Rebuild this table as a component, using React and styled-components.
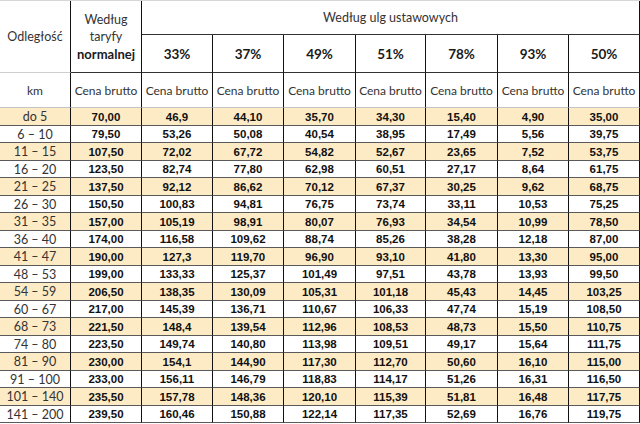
import React from "react";
import styled, { createGlobalStyle } from "styled-components";

const GlobalStyle = createGlobalStyle`
  html, body {
    margin: 0;
    padding: 0;
    background: #fff;
  }
  * { box-sizing: border-box; }
`;

const widths = [71, 71, 71, 71, 72, 70, 72, 71, 71];

const Grid = styled.div`
  display: grid;
  grid-template-columns: ${widths.map((w) => `${w}px`).join(" ")};
  grid-template-rows: 34px 38px 35px repeat(9, 18px 17px);
  width: 640px;
  border-top: 1px solid #d6d6d6;
  font-family: Lato, "Open Sans", sans-serif;
  color: #333;
`;

const Cell = styled.div`
  display: flex;
  flex-direction: column;
  align-items: center;
  justify-content: center;
  text-align: center;
  white-space: nowrap;
  border-right: 1px solid #111;
  border-bottom: 1px solid ${(p) => p.$bottom || "#333"};
  background: ${(p) => (p.$alt ? "#fdebc6" : "#fff")};
  grid-column: span ${(p) => p.$cols || 1};
  grid-row: span ${(p) => p.$rows || 1};
`;

const HeadCell = styled(Cell)`
  font-size: 12.5px;
  line-height: 17px;
`;

const Strong = styled.span`
  font-weight: bold;
  font-size: 13px;
  color: #1a1a1a;
  margin-top: 1px;
`;

const PercentCell = styled(Cell)`
  font-weight: bold;
  font-size: 13.5px;
  color: #1a1a1a;
  padding-top: 1px;
`;

const SubHeadCell = styled(Cell)`
  font-size: 12px;
  border-bottom-color: #c4c4c4;
`;

const KmCell = styled(Cell)`
  font-size: 12.5px;
  color: #333;
  border-bottom-color: #5a5a5a;
`;

const PriceCell = styled(Cell)`
  font-family: "Liberation Sans", Arial, sans-serif;
  font-weight: bold;
  font-size: 11.5px;
  color: #111;
  border-bottom-color: #5a5a5a;
`;

const percents = ["33%", "37%", "49%", "51%", "78%", "93%", "50%"];

const rows = [
  ["do 5", "70,00", "46,9", "44,10", "35,70", "34,30", "15,40", "4,90", "35,00"],
  ["6 – 10", "79,50", "53,26", "50,08", "40,54", "38,95", "17,49", "5,56", "39,75"],
  ["11 – 15", "107,50", "72,02", "67,72", "54,82", "52,67", "23,65", "7,52", "53,75"],
  ["16 – 20", "123,50", "82,74", "77,80", "62,98", "60,51", "27,17", "8,64", "61,75"],
  ["21 – 25", "137,50", "92,12", "86,62", "70,12", "67,37", "30,25", "9,62", "68,75"],
  ["26 – 30", "150,50", "100,83", "94,81", "76,75", "73,74", "33,11", "10,53", "75,25"],
  ["31 – 35", "157,00", "105,19", "98,91", "80,07", "76,93", "34,54", "10,99", "78,50"],
  ["36 – 40", "174,00", "116,58", "109,62", "88,74", "85,26", "38,28", "12,18", "87,00"],
  ["41 – 47", "190,00", "127,3", "119,70", "96,90", "93,10", "41,80", "13,30", "95,00"],
  ["48 – 53", "199,00", "133,33", "125,37", "101,49", "97,51", "43,78", "13,93", "99,50"],
  ["54 – 59", "206,50", "138,35", "130,09", "105,31", "101,18", "45,43", "14,45", "103,25"],
  ["60 – 67", "217,00", "145,39", "136,71", "110,67", "106,33", "47,74", "15,19", "108,50"],
  ["68 – 73", "221,50", "148,4", "139,54", "112,96", "108,53", "48,73", "15,50", "110,75"],
  ["74 – 80", "223,50", "149,74", "140,80", "113,98", "109,51", "49,17", "15,64", "111,75"],
  ["81 – 90", "230,00", "154,1", "144,90", "117,30", "112,70", "50,60", "16,10", "115,00"],
  ["91 – 100", "233,00", "156,11", "146,79", "118,83", "114,17", "51,26", "16,31", "116,50"],
  ["101 – 140", "235,50", "157,78", "148,36", "120,10", "115,39", "51,81", "16,48", "117,75"],
  ["141 – 200", "239,50", "160,46", "150,88", "122,14", "117,35", "52,69", "16,76", "119,75"],
];

export default function App() {
  return (
    <>
      <GlobalStyle />
      <Grid>
        <HeadCell $rows={2} $bottom="#cfcfcf">
          Odległość
        </HeadCell>
        <HeadCell $rows={2}>
          <span>Według</span>
          <span>taryfy</span>
          <Strong>normalnej</Strong>
        </HeadCell>
        <HeadCell $cols={7}>Według ulg ustawowych</HeadCell>

        {percents.map((p) => (
          <PercentCell key={p}>{p}</PercentCell>
        ))}

        <SubHeadCell>km</SubHeadCell>
        {widths.slice(1).map((w, i) => (
          <SubHeadCell key={i}>Cena brutto</SubHeadCell>
        ))}

        {rows.map((r, i) => (
          <React.Fragment key={r[0]}>
            <KmCell $alt={i % 2 === 0}>{r[0]}</KmCell>
            {r.slice(1).map((v, j) => (
              <PriceCell key={j} $alt={i % 2 === 0}>
                {v}
              </PriceCell>
            ))}
          </React.Fragment>
        ))}
      </Grid>
    </>
  );
}
